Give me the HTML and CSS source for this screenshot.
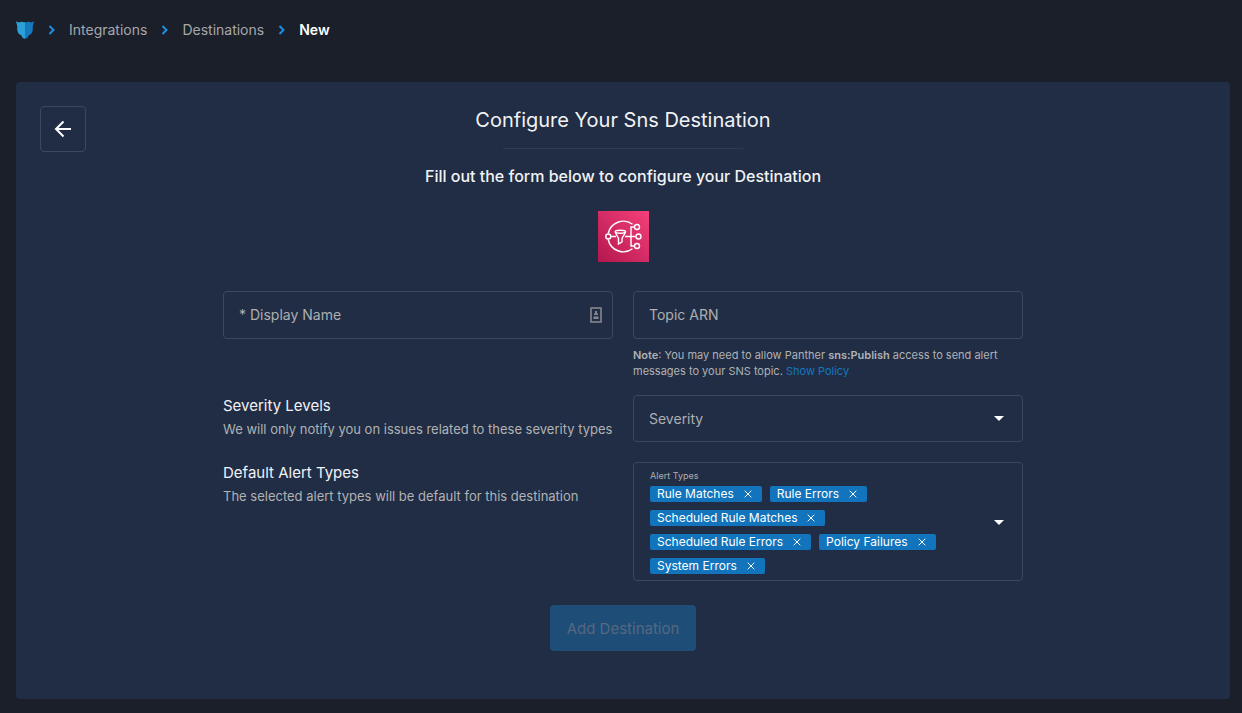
FILE: index.html
```html
<!DOCTYPE html>
<html lang="en">
<head>
<meta charset="utf-8">
<meta name="viewport" content="width=device-width, initial-scale=1">
<title>New Destination</title>
<link rel="stylesheet" href="styles.css">
</head>
<body>
<header class="topbar">
  <nav class="breadcrumbs" aria-label="Breadcrumb">
    <a class="home" href="#" aria-label="Home">
      <svg width="18" height="18" viewBox="0 0 18 18" aria-hidden="true">
        <path fill="#2a9fd8" d="M0 .2 2.6 1.4 5 .8 9 1.2V17.8L6.6 17 5.6 14.8 2.4 12.6 1.2 9 1.2 5Z"/>
        <path fill="#1878be" d="M18 .2 15.4 1.4 13 .8 9 1.2V17.8L11.4 17 12.4 14.8 15.6 12.6 16.8 9 16.8 5Z"/>
      </svg>
    </a>
    <svg class="chevron" width="7" height="10" viewBox="0 0 7 10" aria-hidden="true"><path d="M1.5 1l4 4-4 4"/></svg>
    <a href="#">Integrations</a>
    <svg class="chevron" width="7" height="10" viewBox="0 0 7 10" aria-hidden="true"><path d="M1.5 1l4 4-4 4"/></svg>
    <a href="#">Destinations</a>
    <svg class="chevron" width="7" height="10" viewBox="0 0 7 10" aria-hidden="true"><path d="M1.5 1l4 4-4 4"/></svg>
    <span class="current" aria-current="page">New</span>
  </nav>
</header>
<main class="panel">
  <button class="back" type="button" aria-label="Go back">
    <svg width="18" height="18" viewBox="0 0 18 18" aria-hidden="true"><path d="M17 9H2.500M9.500 1.500 2 9 9.500 16.500"/></svg>
  </button>
  <div class="intro">
    <h1 class="title">Configure Your Sns Destination</h1>
    <hr class="rule">
    <p class="subtitle">Fill out the form below to configure your Destination</p>
    <svg class="logo" width="51" height="51" viewBox="0 0 51 51" role="img" aria-label="Amazon SNS">
      <defs><linearGradient id="sns" x1="0" y1="1" x2="1" y2="0"><stop offset="0" stop-color="#b3174d"/><stop offset="1" stop-color="#f5407b"/></linearGradient></defs>
      <rect width="51" height="51" fill="url(#sns)"/>
      <g fill="none" stroke="#fff" stroke-width="1.4">
        <path d="M10.2 22.5A15.5 15.5 0 0 1 34.5 13.2M10.2 28.5A15.5 15.5 0 0 0 34.5 37.8"/>
        <circle cx="10.3" cy="25.5" r="2.5"/>
        <path d="M12.8 25.5H18M27 25.5H37.5M37 16H33V35H37"/>
        <circle cx="39" cy="16" r="2.5"/><circle cx="40.5" cy="25.5" r="2.5"/><circle cx="39" cy="35" r="2.5"/>
        <path d="M17.2 21.2 20.5 27.5V33L24 30.8V27.5L27.6 21.2"/>
        <ellipse cx="22.4" cy="20.8" rx="5.2" ry="1.5"/>
      </g>
    </svg>
  </div>
  <form class="form">
    <div class="row row-first">
      <div class="field">
        <input class="control" id="display-name" type="text" required>
        <label class="field-label" for="display-name">* Display Name</label>
        <svg class="autofill" width="12" height="16" viewBox="0 0 12 16" aria-hidden="true">
          <rect x="1" y="1" width="10" height="14" fill="none" stroke="#85878c" stroke-width="1.6"/>
          <path fill="#85878c" d="M5 4h2v2l1 1v1H4V7l1-1zM3.5 9.5h5V12h-5z"/>
        </svg>
      </div>
      <div>
        <div class="field">
          <input class="control" id="topic-arn" type="text" aria-describedby="arn-note">
          <label class="field-label" for="topic-arn">Topic ARN</label>
        </div>
        <p class="note" id="arn-note"><b>Note</b>: You may need to allow Panther <b>sns:Publish</b> access to send alert messages to your SNS topic. <a href="#">Show Policy</a></p>
      </div>
    </div>
    <div class="row">
      <div>
        <h2 class="heading">Severity Levels</h2>
        <p class="help">We will only notify you on issues related to these severity types</p>
      </div>
      <div class="field">
        <select class="control" id="severity"><option></option></select>
        <label class="field-label" for="severity">Severity</label>
        <svg class="caret" width="10" height="5" viewBox="0 0 10 5" aria-hidden="true"><path d="M0 0h10L5 5z"/></svg>
      </div>
    </div>
    <div class="row">
      <div>
        <h2 class="heading">Default Alert Types</h2>
        <p class="help">The selected alert types will be default for this destination</p>
      </div>
      <div class="multi" role="group" aria-labelledby="types-label">
        <div class="multi-body">
          <span class="multi-label" id="types-label">Alert Types</span>
          <ul class="chips">
            <li class="chip">Rule Matches<button type="button" aria-label="Remove Rule Matches"><svg width="8" height="8" viewBox="0 0 8 8"><path d="M.7.7l6.6 6.6M7.3.7.7 7.3"/></svg></button></li>
            <li class="chip">Rule Errors<button type="button" aria-label="Remove Rule Errors"><svg width="8" height="8" viewBox="0 0 8 8"><path d="M.7.7l6.6 6.6M7.3.7.7 7.3"/></svg></button></li>
            <li class="chip">Scheduled Rule Matches<button type="button" aria-label="Remove Scheduled Rule Matches"><svg width="8" height="8" viewBox="0 0 8 8"><path d="M.7.7l6.6 6.6M7.3.7.7 7.3"/></svg></button></li>
            <li class="chip">Scheduled Rule Errors<button type="button" aria-label="Remove Scheduled Rule Errors"><svg width="8" height="8" viewBox="0 0 8 8"><path d="M.7.7l6.6 6.6M7.3.7.7 7.3"/></svg></button></li>
            <li class="chip">Policy Failures<button type="button" aria-label="Remove Policy Failures"><svg width="8" height="8" viewBox="0 0 8 8"><path d="M.7.7l6.6 6.6M7.3.7.7 7.3"/></svg></button></li>
            <li class="chip">System Errors<button type="button" aria-label="Remove System Errors"><svg width="8" height="8" viewBox="0 0 8 8"><path d="M.7.7l6.6 6.6M7.3.7.7 7.3"/></svg></button></li>
          </ul>
        </div>
        <button class="toggle" type="button" aria-label="Open alert types">
          <svg class="caret-icon" width="10" height="5" viewBox="0 0 10 5" aria-hidden="true"><path d="M0 0h10L5 5z"/></svg>
        </button>
      </div>
    </div>
    <button class="submit" type="submit" disabled>Add Destination</button>
  </form>
</main>
</body>
</html>
```
FILE: styles.css
```css
* { box-sizing: border-box; }
body {
  margin: 0;
  padding: 0 12px 14px 16px;
  min-height: 100vh;
  display: flex;
  flex-direction: column;
  background: #1a1f2a;
  color: #f1f2f4;
  font-family: Inter, "Liberation Sans", sans-serif;
  font-size: 14px;
}
h1, h2, p, ul { margin: 0; padding: 0; }
button { font: inherit; color: inherit; padding: 0; border: 0; background: none; }
svg { display: block; }

.topbar { padding: 20px 0 42px; }
.breadcrumbs { display: flex; align-items: center; gap: 14px; line-height: 20px; }
.breadcrumbs a { color: #a6a7aa; text-decoration: none; }
.breadcrumbs .current { color: #fff; font-weight: 600; }
.chevron { fill: none; stroke: #1c8fe3; stroke-width: 2; }

.panel { position: relative; flex: 1; padding: 24px 24px 48px; border-radius: 4px; background: #202d44; }
.back {
  position: absolute;
  top: 24px;
  left: 24px;
  width: 46px;
  height: 46px;
  display: grid;
  place-items: center;
  border: 1px solid #3a4960;
  border-radius: 4px;
}
.back svg { fill: none; stroke: #fff; stroke-width: 2; }

.intro { display: flex; flex-direction: column; align-items: center; text-align: center; }
.title { font-size: 20px; font-weight: 400; line-height: 28px; }
.rule { width: 240px; height: 1px; margin: 14px 0 16px; border: 0; background: #2e3c54; }
.subtitle { font-size: 16px; font-weight: 500; line-height: 22px; }
.logo { margin: 24px 0 29px; }

.form { max-width: 800px; margin: 0 auto; display: flex; flex-direction: column; }
.row { display: grid; grid-template-columns: 1fr 1fr; gap: 20px; align-items: start; margin-bottom: 20px; }
.row-first { margin-bottom: 16px; }
.field { display: grid; align-items: center; }
.field > * { grid-area: 1 / 1; }
.control {
  width: 100%;
  height: 48px;
  padding: 0 16px;
  border: 1px solid #3a4960;
  border-radius: 4px;
  background: transparent;
  color: #fff;
  font: inherit;
  appearance: none;
}
select.control { height: 47px; }
.field-label { padding-left: 16px; color: #aeafb1; pointer-events: none; line-height: 20px; justify-self: start; }
.autofill { justify-self: end; margin-right: 11px; }
.caret { justify-self: end; margin-right: 19px; pointer-events: none; }
.caret, .caret-icon { fill: #fff; }
.note { margin-top: 8px; color: #b1b2b4; font-size: 11px; line-height: 16px; }
.note b { font-weight: 600; }
.note a { color: #1478c0; text-decoration: none; }
.heading { font-size: 15px; font-weight: 400; line-height: 22px; }
.help { margin-top: 2px; color: #b1b2b4; font-size: 13px; line-height: 20px; }

.multi { display: flex; border: 1px solid #3a4960; border-radius: 4px; padding: 7px 0 6px 16px; }
.multi-body { flex: 1; }
.multi-label { display: block; color: #aeafb1; font-size: 9px; line-height: 12px; }
.chips { display: flex; flex-wrap: wrap; gap: 8px; list-style: none; margin-top: 4px; }
.chip {
  display: flex;
  align-items: center;
  gap: 10px;
  height: 16px;
  padding: 0 10px 0 7px;
  border-radius: 2px;
  background: #1174bc;
  color: #fff;
  font-size: 12px;
  line-height: 16px;
}
.chip svg { fill: none; stroke: #fff; stroke-width: 1; }
.toggle { width: 46px; display: grid; place-items: center; }

.submit {
  align-self: center;
  margin-top: 4px;
  padding: 0 17px;
  height: 46px;
  border-radius: 4px;
  background: #1e4e78;
  color: #56677f;
  font-size: 15px;
}
```
